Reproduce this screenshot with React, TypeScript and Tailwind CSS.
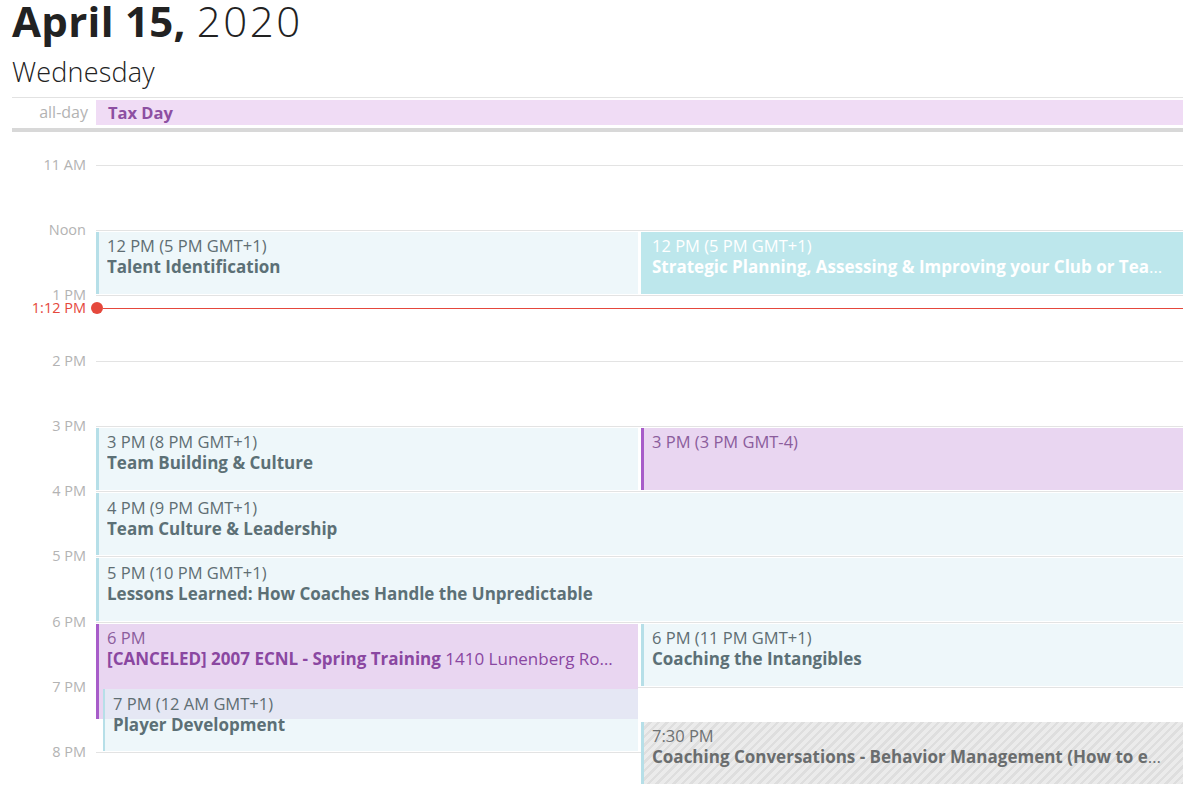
import React from 'react';

// ── Layout constants ────────────────────────────────────────────────────────
const HOUR = 65.3;      // px per hour
const START = 10.5;     // timeline begins at 10:30
const COL_W = 542;      // width of a half column
const RIGHT_X = 545;    // left offset of the right column

type Kind = 'blue' | 'purple' | 'sel' | 'hatch' | 'overlay';

interface CalEvent {
  start: number;
  end: number;
  left: number;
  width: number;
  kind: Kind;
  time: string;
  zone?: string;
  title?: string;
  loc?: string;
}

const events: CalEvent[] = [
  { start: 12, end: 13, left: 0, width: COL_W, kind: 'blue', time: '12 PM', zone: '(5 PM GMT+1)', title: 'Talent Identification' },
  { start: 12, end: 13, left: RIGHT_X, width: COL_W, kind: 'sel', time: '12 PM', zone: '(5 PM GMT+1)', title: 'Strategic Planning, Assessing & Improving your Club or Team Environment' },
  { start: 15, end: 16, left: 0, width: COL_W, kind: 'blue', time: '3 PM', zone: '(8 PM GMT+1)', title: 'Team Building & Culture' },
  { start: 15, end: 16, left: RIGHT_X, width: COL_W, kind: 'purple', time: '3 PM', zone: '(3 PM GMT-4)' },
  { start: 16, end: 17, left: 0, width: 1087, kind: 'blue', time: '4 PM', zone: '(9 PM GMT+1)', title: 'Team Culture & Leadership' },
  { start: 17, end: 18, left: 0, width: 1087, kind: 'blue', time: '5 PM', zone: '(10 PM GMT+1)', title: 'Lessons Learned: How Coaches Handle the Unpredictable' },
  { start: 18, end: 19.5, left: 0, width: COL_W, kind: 'purple', time: '6 PM', title: '[CANCELED] 2007 ECNL - Spring Training', loc: '1410 Lunenberg Road, Sports Complex' },
  { start: 19, end: 20, left: 7, width: COL_W - 7, kind: 'overlay', time: '7 PM', zone: '(12 AM GMT+1)', title: 'Player Development' },
  { start: 18, end: 19, left: RIGHT_X, width: COL_W, kind: 'blue', time: '6 PM', zone: '(11 PM GMT+1)', title: 'Coaching the Intangibles' },
  { start: 19.5, end: 20.5, left: RIGHT_X, width: COL_W, kind: 'hatch', time: '7:30 PM', title: 'Coaching Conversations - Behavior Management (How to effectively manage players)' },
];

const hours = ['11 AM', 'Noon', '1 PM', '2 PM', '3 PM', '4 PM', '5 PM', '6 PM', '7 PM', '8 PM'];

const kindStyles: Record<Kind, { box: string; time: string; title: string }> = {
  blue:    { box: 'bg-[#eef7fa] border-l-[3px] border-[#b6dfe8]', time: 'text-[#5f6e73]', title: 'text-[#5c7076]' },
  overlay: { box: 'bg-[rgba(227,242,247,0.6)] border-l-[2px] border-[#b6dfe8]', time: 'text-[#5f6e73]', title: 'text-[#5c7076]' },
  purple:  { box: 'bg-[#e9d6f1] border-l-[3px] border-[#a75cc9]', time: 'text-[#8b5d9c]', title: 'text-[#8a47a1]' },
  sel:     { box: 'bg-[#bde7ec] border-l-[3px] border-[#bde7ec]', time: 'text-white', title: 'text-white' },
  hatch:   { box: 'bg-[repeating-linear-gradient(135deg,#ebebeb_0px,#ebebeb_3.5px,#dedede_3.5px,#dedede_6px)] border-l-[3px] border-[#b6dfe8]', time: 'text-[#6f7273]', title: 'text-[#6a6d6e]' },
};

// ── Event block ─────────────────────────────────────────────────────────────
function EventBlock({ ev }: { ev: CalEvent }) {
  const s = kindStyles[ev.kind];
  return (
    <div
      className={`absolute overflow-hidden pl-[8px] pr-[18px] pt-[3.5px] ${s.box}`}
      style={{
        top: (ev.start - START) * HOUR + 2,
        height: (ev.end - ev.start) * HOUR - 3,
        left: ev.left,
        width: ev.width,
      }}
    >
      <div className={`text-[16.5px] leading-[21px] whitespace-nowrap ${s.time}`}>
        {ev.time}
        {ev.zone && <span> {ev.zone}</span>}
      </div>
      {ev.title && (
        <div className={`text-[17px] leading-[21px] whitespace-nowrap truncate ${s.title}`}>
          <span className="font-bold">{ev.title}</span>
          {ev.loc && <span className="font-normal"> {ev.loc}</span>}
        </div>
      )}
    </div>
  );
}

// ── Page ────────────────────────────────────────────────────────────────────
export default function App() {
  const nowY = (13.2 - START) * HOUR;

  return (
    <div className="w-[1200px] h-[808px] overflow-hidden bg-white font-['Open_Sans','Liberation_Sans',sans-serif] text-[#222]">
      {/* Header */}
      <header className="h-[97px] pl-[12px]">
        <h1 className="text-[42px] leading-[42px]">
          <span className="font-bold tracking-[0.3px]">April 15,</span>{' '}
          <span className="font-light tracking-[2.5px]">2020</span>
        </h1>
        <div className="mt-[14px] text-[27px] leading-[32px] font-light tracking-[0.2px]">Wednesday</div>
      </header>

      {/* All-day row */}
      <section className="ml-[12px] mr-[17px] border-t border-[#e2e2e2] pt-[2px]">
        <div className="flex h-[25px]">
          <div className="w-[84px] pr-[8px] text-right text-[16px] leading-[25px] text-[#b3b3b3]">all-day</div>
          <div className="flex-1 bg-[#f0dcf5] pl-[12px] text-[16.5px] leading-[25px] font-bold text-[#8d4fa2]">Tax Day</div>
        </div>
        <div className="mt-[3px] h-[4px] bg-[#d8d8d8]" />
      </section>

      {/* Timeline */}
      <section className="relative">
        <div className="h-[32.65px]" />
        {hours.map((h) => (
          <div key={h} className="flex h-[65.3px]">
            <div className="w-[96px] pr-[10px] -mt-[10px] text-right text-[14.5px] leading-[20px] text-[#b3b3b3]">{h}</div>
            <div className="flex-1 mr-[17px] border-t border-[#e3e3e3]" />
          </div>
        ))}

        {/* Events layer */}
        <div className="absolute top-0 left-[96px] right-[17px] bottom-0">
          {events.map((ev, i) => (
            <EventBlock key={i} ev={ev} />
          ))}
        </div>

        {/* Current time */}
        <div className="absolute left-0 right-[17px] flex items-center" style={{ top: nowY - 10 }}>
          <div className="w-[91px] pr-[5px] text-right text-[14.5px] leading-[20px] text-[#e5483c]">1:12 PM</div>
          <div className="w-[12px] h-[12px] rounded-full bg-[#e5483c]" />
          <div className="flex-1 h-px bg-[#e5483c]" />
        </div>
      </section>
    </div>
  );
}
